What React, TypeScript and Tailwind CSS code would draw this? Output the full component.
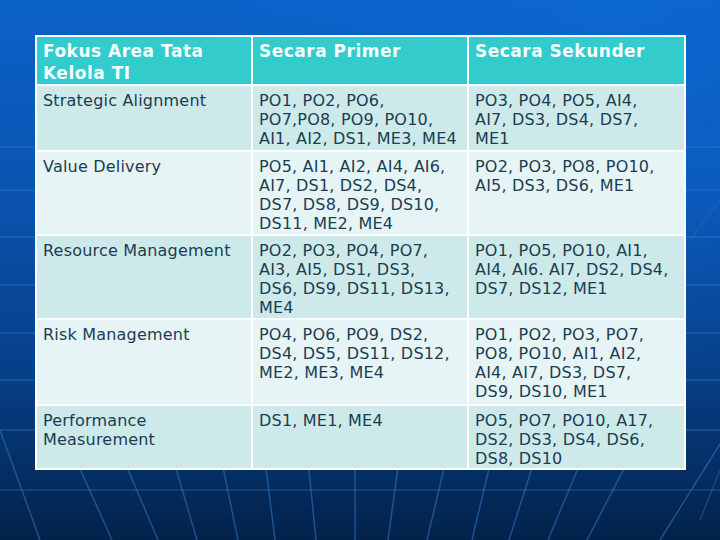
import React from "react";

const rows: { area: string[]; primer: string[]; sekunder: string[]; h: number; dark: boolean }[] = [
  {
    area: ["Strategic Alignment"],
    primer: ["PO1, PO2, PO6,", "PO7,PO8, PO9, PO10,", "AI1, AI2, DS1, ME3, ME4"],
    sekunder: ["PO3, PO4, PO5, AI4,", "AI7, DS3, DS4, DS7,", "ME1"],
    h: 64,
    dark: true,
  },
  {
    area: ["Value Delivery"],
    primer: ["PO5, AI1, AI2, AI4, AI6,", "AI7, DS1, DS2, DS4,", "DS7, DS8, DS9, DS10,", "DS11, ME2, ME4"],
    sekunder: ["PO2, PO3, PO8, PO10,", "AI5, DS3, DS6, ME1"],
    h: 82,
    dark: false,
  },
  {
    area: ["Resource Management"],
    primer: ["PO2, PO3, PO4, PO7,", "AI3, AI5, DS1, DS3,", "DS6, DS9, DS11, DS13,", "ME4"],
    sekunder: ["PO1, PO5, PO10, AI1,", "AI4, AI6. AI7, DS2, DS4,", "DS7, DS12, ME1"],
    h: 82,
    dark: true,
  },
  {
    area: ["Risk Management"],
    primer: ["PO4, PO6, PO9, DS2,", "DS4, DS5, DS11, DS12,", "ME2, ME3, ME4"],
    sekunder: ["PO1, PO2, PO3, PO7,", "PO8, PO10, AI1, AI2,", "AI4, AI7, DS3, DS7,", "DS9, DS10, ME1"],
    h: 84,
    dark: false,
  },
  {
    area: ["Performance", "Measurement"],
    primer: ["DS1, ME1, ME4"],
    sekunder: ["PO5, PO7, PO10, A17,", "DS2, DS3, DS4, DS6,", "DS8, DS10"],
    h: 62,
    dark: true,
  },
];

const bottomLines: [number, number, number, number][] = [
  [0, 430, 40, 540],
  [40, 380, 112, 540],
  [90, 380, 158, 540],
  [150, 380, 197, 540],
  [205, 380, 238, 540],
  [255, 380, 275, 540],
  [300, 380, 316, 540],
  [355, 380, 355, 540],
  [410, 380, 388, 540],
  [465, 380, 427, 540],
  [510, 380, 472, 540],
  [560, 380, 509, 540],
  [615, 380, 548, 540],
  [670, 380, 587, 540],
  [760, 380, 660, 540],
];

function Lines({ lines }: { lines: string[] }) {
  return (
    <>
      {lines.map((l, i) => (
        <div key={i} className="whitespace-nowrap">
          {l}
        </div>
      ))}
    </>
  );
}

export default function App() {
  return (
    <div className="relative w-[720px] h-[540px] overflow-hidden bg-[#0a4fa6]">
      <svg className="absolute inset-0" width="720" height="540" viewBox="0 0 720 540">
        <defs>
          <linearGradient id="bg" x1="0" y1="0" x2="0" y2="1">
            <stop offset="0%" stopColor="#0b62c9" />
            <stop offset="35%" stopColor="#0a54b0" />
            <stop offset="70%" stopColor="#073f86" />
            <stop offset="100%" stopColor="#03224a" />
          </linearGradient>
          <radialGradient id="glow" cx="0.85" cy="0.1" r="0.6">
            <stop offset="0%" stopColor="#0d6ad6" stopOpacity="0.6" />
            <stop offset="100%" stopColor="#0d6ad6" stopOpacity="0" />
          </radialGradient>
        </defs>
        <rect width="720" height="540" fill="url(#bg)" />
        <rect width="720" height="540" fill="url(#glow)" />
        <g stroke="#3f86d6" strokeWidth="1.5" strokeOpacity="0.35">
          {[147, 190, 237, 285, 333, 380, 430].map((y) => (
            <line key={y} x1="0" y1={y} x2="720" y2={y} />
          ))}
          <line x1="0" y1="490" x2="720" y2="490" strokeOpacity="0.3" />
        </g>
        <g stroke="#2f78c8" strokeWidth="1.5" strokeOpacity="0.55">
          {bottomLines.map(([a, b, c, d], i) => (
            <line key={i} x1={a} y1={b} x2={c} y2={d} />
          ))}
          <line x1="690" y1="240" x2="720" y2="200" strokeOpacity="0.3" />
          <line x1="700" y1="520" x2="720" y2="470" strokeOpacity="0.4" />
        </g>
      </svg>

      <div className="relative pt-[35px] pl-[35px]">
        <div
          className="grid grid-cols-[214px_214px_215px] gap-[2px] bg-white p-[2px] w-[651px] text-[#1a3d52] text-[16px] leading-[19px] tracking-[0.2px]"
          style={{ fontFamily: '"DejaVu Sans", Verdana, sans-serif' }}
        >
          {["Fokus Area Tata\nKelola TI", "Secara Primer", "Secara Sekunder"].map((t, i) => (
            <div
              key={i}
              className="h-[47px] bg-[#33cbcb] text-[#f2ffff] font-bold text-[17px] leading-[22px] tracking-[0.5px] pl-[6px] pt-[3px] whitespace-pre-line"
            >
              {t}
            </div>
          ))}
          {rows.map((r, ri) => {
            const bg = r.dark ? "bg-[#cde9ea]" : "bg-[#e7f4f5]";
            return (
              <React.Fragment key={ri}>
                <div className={`${bg} pl-[6px] pt-[5px]`} style={{ height: r.h }}>
                  <Lines lines={r.area} />
                </div>
                <div className={`${bg} pl-[6px] pt-[5px]`} style={{ height: r.h }}>
                  <Lines lines={r.primer} />
                </div>
                <div className={`${bg} pl-[6px] pt-[5px]`} style={{ height: r.h }}>
                  <Lines lines={r.sekunder} />
                </div>
              </React.Fragment>
            );
          })}
        </div>
      </div>
    </div>
  );
}
